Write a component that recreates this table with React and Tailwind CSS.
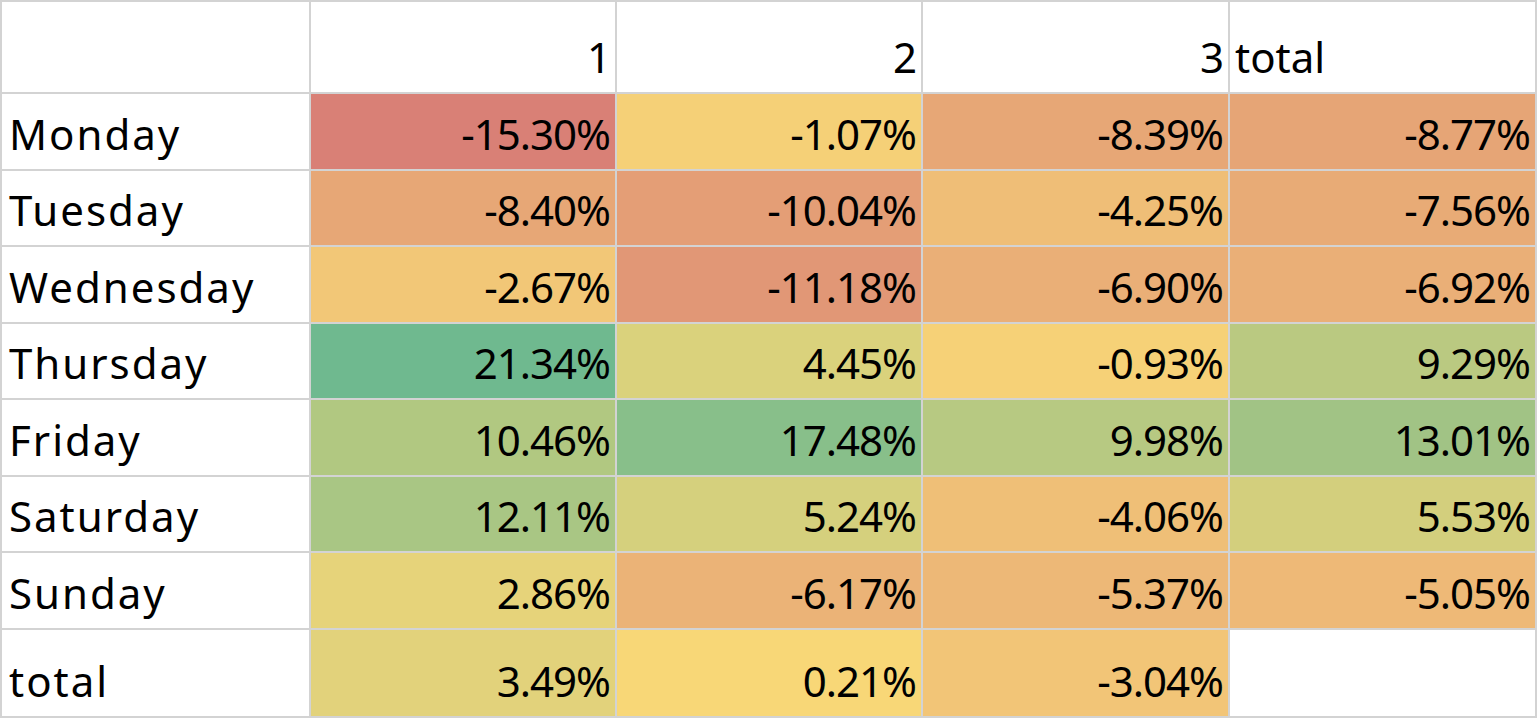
import React from "react";

const rows = [
  { day: "Monday", cells: [["-15.30%", "bg-[#d98076]"], ["-1.07%", "bg-[#f5d077]"], ["-8.39%", "bg-[#e7a776]"], ["-8.77%", "bg-[#e6a576]"]] },
  { day: "Tuesday", cells: [["-8.40%", "bg-[#e7a776]"], ["-10.04%", "bg-[#e49e76]"], ["-4.25%", "bg-[#efbe77]"], ["-7.56%", "bg-[#e8ab76]"]] },
  { day: "Wednesday", cells: [["-2.67%", "bg-[#f2c777]"], ["-11.18%", "bg-[#e19776]"], ["-6.90%", "bg-[#eaaf77]"], ["-6.92%", "bg-[#eaaf77]"]] },
  { day: "Thursday", cells: [["21.34%", "bg-[#6fb98f]"], ["4.45%", "bg-[#dad27c]"], ["-0.93%", "bg-[#f6d177]"], ["9.29%", "bg-[#bac981]"]] },
  { day: "Friday", cells: [["10.46%", "bg-[#b1c881]"], ["17.48%", "bg-[#88bf8a]"], ["9.98%", "bg-[#b7c982]"], ["13.01%", "bg-[#a1c385]"]] },
  { day: "Saturday", cells: [["12.11%", "bg-[#a9c684]"], ["5.24%", "bg-[#d5d07d]"], ["-4.06%", "bg-[#efbf77]"], ["5.53%", "bg-[#d3cf7d]"]] },
  { day: "Sunday", cells: [["2.86%", "bg-[#e6d37a]"], ["-6.17%", "bg-[#ebb377]"], ["-5.37%", "bg-[#edb877]"], ["-5.05%", "bg-[#eeb977]"]] },
];

const totals = [["3.49%", "bg-[#e2d27b]"], ["0.21%", "bg-[#f8d777]"], ["-3.04%", "bg-[#f2c577]"]];

function Label({ children }) {
  return (
    <div className="bg-white flex items-end pl-[7px] pb-[14px] tracking-[2px] leading-none">
      {children}
    </div>
  );
}

function Num({ value, bg }) {
  return (
    <div className={`${bg} flex items-end justify-end pr-[5px] pb-[14px] tracking-[-1px] leading-none`}>
      {value}
    </div>
  );
}

export default function App() {
  return (
    <div className="bg-white w-[1540px] h-[722px] font-['Noto_Sans',sans-serif] text-[42px] text-black">
      <div className="w-[1537px] grid grid-cols-[307px_304px_304px_305px_305px] grid-rows-[90px_repeat(7,74.5px)_86.5px] gap-[2px] p-[2px] bg-[#d3d3d3]">
        <div className="bg-white" />
        {["1", "2", "3"].map((h) => (
          <Num key={h} value={h} bg="bg-white" />
        ))}
        <div className="bg-white flex items-end pl-[5px] pb-[14px] leading-none">total</div>

        {rows.map((r) => (
          <React.Fragment key={r.day}>
            <Label>{r.day}</Label>
            {r.cells.map(([v, bg], i) => (
              <Num key={i} value={v} bg={bg} />
            ))}
          </React.Fragment>
        ))}

        <Label>total</Label>
        {totals.map(([v, bg], i) => (
          <Num key={i} value={v} bg={bg} />
        ))}
        <div className="bg-white" />
      </div>
    </div>
  );
}
